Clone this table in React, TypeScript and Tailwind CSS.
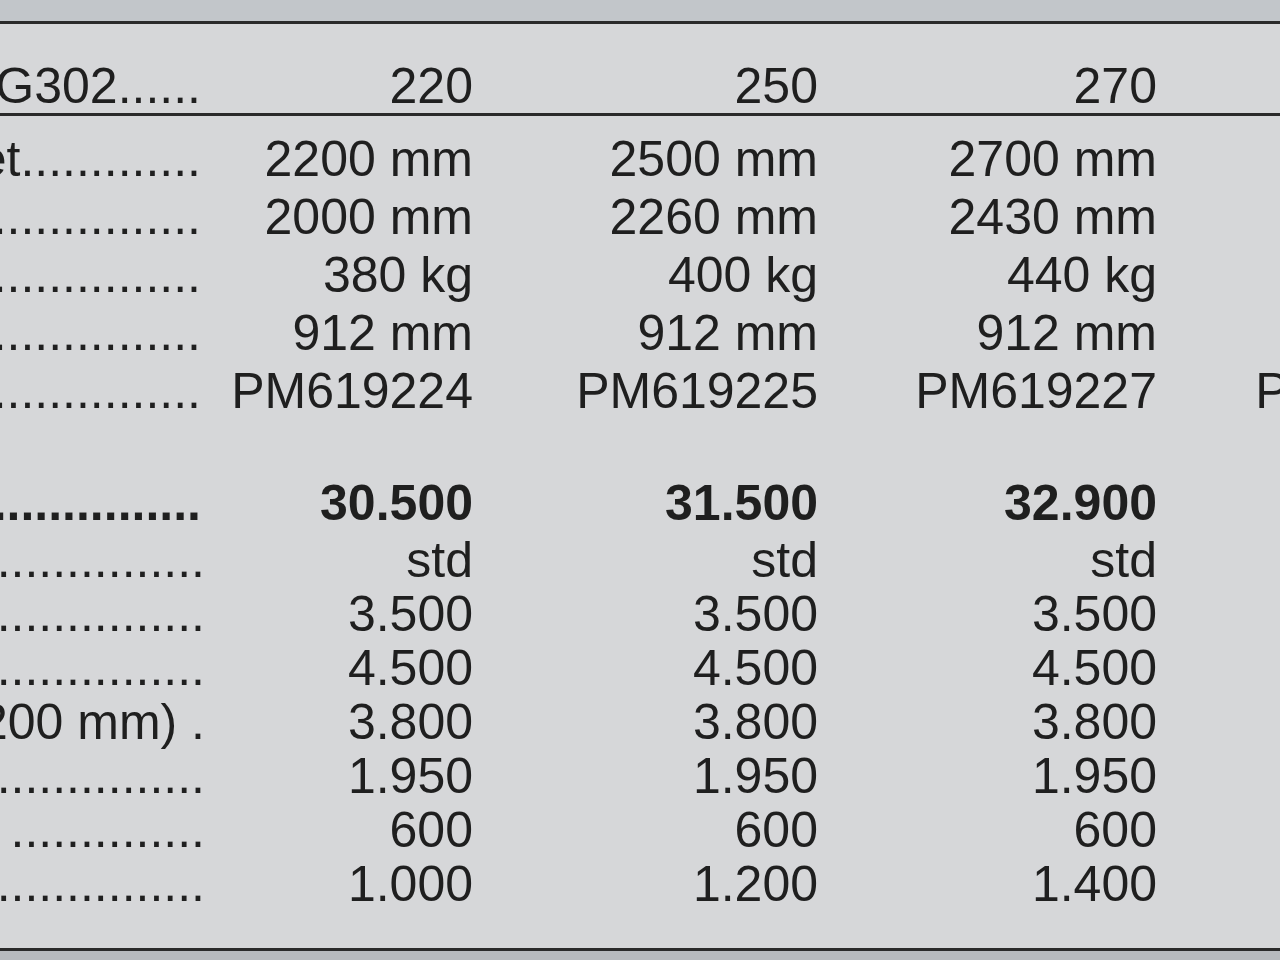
const font = { fontFamily: '"Liberation Sans", Arial, sans-serif' };

type Row = { label: string; values: string[]; bold?: boolean };

// first block: dimensions and part numbers
const specRows: Row[] = [
  { label: "et.............", values: ["2200 mm", "2500 mm", "2700 mm", ""] },
  { label: "...............", values: ["2000 mm", "2260 mm", "2430 mm", ""] },
  { label: "...............", values: ["380 kg", "400 kg", "440 kg", ""] },
  { label: "...............", values: ["912 mm", "912 mm", "912 mm", ""] },
  { label: "...............", values: ["PM619224", "PM619225", "PM619227", "PM619229"] },
];

// second block: prices
const priceRows: Row[] = [
  { label: "...............", values: ["std", "std", "std", ""] },
  { label: "...............", values: ["3.500", "3.500", "3.500", ""] },
  { label: "...............", values: ["4.500", "4.500", "4.500", ""] },
  { label: "200 mm) .", values: ["3.800", "3.800", "3.800", ""] },
  { label: "...............", values: ["1.950", "1.950", "1.950", ""] },
  { label: "r ..............", values: ["600", "600", "600", ""] },
  { label: "...............", values: ["1.000", "1.200", "1.400", ""] },
];

const cols = "grid grid-cols-[207px_266px_345px_339px_340px]";

function Cells({ row, height, pad }: { row: Row; height: string; pad: string }) {
  return (
    <div className={`${cols} ${height} ${row.bold ? "font-bold" : ""}`}>
      <div className={`flex justify-end overflow-hidden whitespace-nowrap ${pad}`}>
        <span>{row.label}</span>
      </div>
      {row.values.map((v, i) => (
        <div key={i} className="flex justify-end whitespace-nowrap">
          {v}
        </div>
      ))}
    </div>
  );
}

export default function App() {
  return (
    <div
      className="w-[1280px] h-[960px] overflow-hidden bg-[#d6d7d9] text-[#1f1f1f] text-[50px] flex flex-col"
      style={font}
    >
      <div className="h-[21px] shrink-0 bg-[#c2c6ca]" />
      <div className="h-[3px] shrink-0 bg-[#2a2a2a]" />

      <div className="pt-[34px] shrink-0">
        <div className={`${cols} h-[55px] leading-[56px]`}>
          <div className="flex justify-end overflow-hidden whitespace-nowrap pr-[6px]">
            <span>G302......</span>
          </div>
          <div className="flex justify-end">220</div>
          <div className="flex justify-end">250</div>
          <div className="flex justify-end">270</div>
          <div />
        </div>
      </div>
      <div className="h-[3px] shrink-0 bg-[#2a2a2a]" />

      <div className="flex-1 pt-[14px]">
        {specRows.map((r, i) => (
          <Cells key={i} row={r} height="h-[58px] leading-[58px]" pad="pr-[6px]" />
        ))}
        <div className="h-[55px]" />
        <Cells
          row={{ label: "...............", values: ["30.500", "31.500", "32.900", ""], bold: true }}
          height="h-[58px] leading-[56px]"
          pad="pr-[6px]"
        />
        {priceRows.map((r, i) => (
          <Cells key={i} row={r} height="h-[54px] leading-[54px]" pad="pr-[2px]" />
        ))}
      </div>

      <div className="h-[3px] shrink-0 bg-[#2a2a2a]" />
      <div className="h-[9px] shrink-0 bg-[#b7babe]" />
    </div>
  );
}
